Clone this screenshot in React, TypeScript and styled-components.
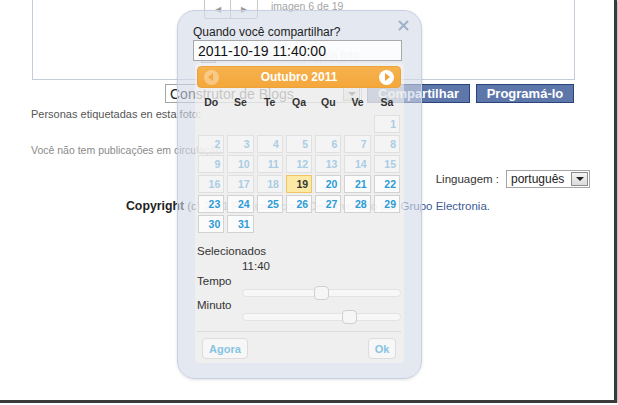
import React from 'react';
import styled, { createGlobalStyle, css } from 'styled-components';

const Global = createGlobalStyle`
  html, body { margin: 0; padding: 0; background: #fff; }
  body { font-family: "Liberation Sans", Arial, sans-serif; }
  * { box-sizing: border-box; }
`;

const Screen = styled.div`
  position: relative;
  width: 617px;
  height: 403px;
  border-right: 3px solid #3a3a3a;
  border-bottom: 3px solid #3a3a3a;
  box-shadow: 1px 1px 2px rgba(0, 0, 0, 0.35);
  overflow: hidden;
  background: #fff;
`;

const Preview = styled.div`
  margin-left: 32px;
  width: 543px;
  height: 80px;
  border: 1px solid #c5ccda;
  border-top: none;
  display: flex;
  flex-direction: column;
`;

const PagerRow = styled.div`
  display: flex;
  align-items: flex-start;
  margin-left: 171px;
  gap: 13px;
`;

const PagerGroup = styled.div`
  display: flex;
  margin-top: -2px;
  height: 21px;
  border: 1px solid #c9c9c9;
  border-radius: 2px;
`;

const PagerBtn = styled.div<{ $first?: boolean }>`
  width: 26px;
  display: flex;
  align-items: center;
  justify-content: center;
  color: #9a9a9a;
  font-size: 8px;
  padding-top: 2px;
  ${(p) => p.$first && css`border-right: 1px solid #c9c9c9;`}
`;

const Caption = styled.span`
  font-size: 10.5px;
  color: #a5a5a5;
  line-height: 12px;
`;

const UploadRow = styled.div`
  display: flex;
  align-items: center;
  gap: 20px;
  margin-top: 27px;
  margin-left: 168px;
`;

const UploadBox = styled.div`
  width: 15px;
  height: 17px;
  border: 1px solid #bbb;
  background: #f4f4f4;
`;

const UploadText = styled.span`
  font-size: 11px;
  color: #777;
`;

const ActionRow = styled.div`
  display: flex;
  align-items: flex-start;
  margin-top: 4px;
  margin-left: 165px;
`;

const Select = styled.div<{ $w: number; $h: number; $size: number }>`
  width: ${(p) => p.$w}px;
  height: ${(p) => p.$h}px;
  border: 1px solid #a5a5a5;
  background: #fff;
  display: flex;
  align-items: center;
  justify-content: space-between;
  padding-left: 4px;
  font-size: ${(p) => p.$size}px;
  color: #222;
  white-space: nowrap;
  overflow: hidden;
`;

const DropBtn = styled.div<{ $w: number }>`
  width: ${(p) => p.$w}px;
  align-self: stretch;
  margin: 1px;
  border: 1px solid #8c8c8c;
  background: linear-gradient(#f4f4f4, #dcdcdc);
  display: flex;
  align-items: center;
  justify-content: center;
  &::after {
    content: '';
    border-left: 4px solid transparent;
    border-right: 4px solid transparent;
    border-top: 4px solid #222;
  }
`;

const FbButton = styled.div<{ $w: number; $ml: number }>`
  width: ${(p) => p.$w}px;
  margin-left: ${(p) => p.$ml}px;
  height: 19px;
  background: #5e77aa;
  border: 1px solid #2a437a;
  color: #fff;
  font-weight: bold;
  font-size: 13px;
  display: flex;
  align-items: center;
  justify-content: center;
  white-space: nowrap;
`;

const Note = styled.div<{ $mt: number; $size: number; $color: string }>`
  margin-top: ${(p) => p.$mt}px;
  margin-left: 31px;
  font-size: ${(p) => p.$size}px;
  line-height: 14px;
  color: ${(p) => p.$color};
  white-space: nowrap;
`;

const LangRow = styled.div`
  display: flex;
  justify-content: flex-end;
  align-items: center;
  margin-top: 13px;
  padding-right: 24px;
  gap: 7px;
  font-size: 11.5px;
  color: #333;
`;

const Copyright = styled.div`
  margin-top: 11px;
  text-align: center;
  font-size: 11.5px;
  line-height: 14px;
  color: #666;
  white-space: nowrap;
  padding-left: 2px;
  b { color: #222; font-size: 12.3px; }
  a { color: #3b5998; text-decoration: none; }
`;

/* ---------- dialog ---------- */

const Dialog = styled.div`
  position: absolute;
  left: 177px;
  top: 10px;
  width: 245px;
  padding: 14px 16px 15px 15px;
  border: 1px solid #c7d1e2;
  border-radius: 18px;
  background: rgba(210, 217, 232, 0.6);
  box-shadow: 0 1px 3px rgba(0, 0, 0, 0.12);
  display: flex;
  flex-direction: column;
  color: #333;
`;

const Close = styled.div`
  position: absolute;
  top: 9px;
  right: 12px;
  width: 11px;
  height: 11px;
  display: flex;
`;

const Title = styled.div`
  font-size: 12px;
  line-height: 14px;
  color: #222;
  white-space: nowrap;
`;

const DateInput = styled.div`
  margin-top: 1px;
  width: 209px;
  height: 21px;
  border: 1px solid #a8a8a8;
  background: rgba(255, 255, 255, 0.85);
  font-size: 14px;
  color: #111;
  padding-left: 4px;
  display: flex;
  align-items: center;
`;

const Panel = styled.div`
  margin-top: 2px;
  margin-left: 2px;
  width: 209px;
  padding: 3px 3px 4px 2px;
  border-radius: 4px;
  background: rgba(250, 246, 237, 0.52);
  display: flex;
  flex-direction: column;
`;

const Header = styled.div`
  height: 22px;
  border: 1px solid #eea23a;
  border-radius: 4px;
  background: linear-gradient(#f6b24e, #f4a73b);
  color: #fff;
  font-weight: bold;
  font-size: 12px;
  display: flex;
  align-items: center;
  justify-content: space-between;
  padding: 0 6px 0 6px;
`;

const NavIcon = styled.div<{ $dir: 'prev' | 'next' }>`
  width: 15px;
  height: 15px;
  border-radius: 50%;
  background: #fff;
  opacity: ${(p) => (p.$dir === 'prev' ? 0.35 : 1)};
  display: flex;
  align-items: center;
  justify-content: center;
  &::after {
    content: '';
    border-top: 4px solid transparent;
    border-bottom: 4px solid transparent;
    ${(p) =>
      p.$dir === 'prev'
        ? css`border-right: 5px solid #f2a13a; margin-right: 2px;`
        : css`border-left: 5px solid #f2a13a; margin-left: 2px;`}
  }
`;

const WeekGrid = styled.div`
  display: grid;
  grid-template-columns: repeat(7, 1fr);
  column-gap: 3px;
  margin: 3px 1px 0 1px;
  height: 22px;
  align-items: center;
  text-align: center;
  font-weight: bold;
  font-size: 10.5px;
  color: #333;
`;

const DayGrid = styled.div`
  display: grid;
  grid-template-columns: repeat(7, 1fr);
  grid-auto-rows: 18px;
  column-gap: 3px;
  row-gap: 2px;
  margin: 2px 1px 0 1px;
`;

type CellKind = 'empty' | 'off' | 'on' | 'today';

const cellStyles: Record<CellKind, ReturnType<typeof css>> = {
  empty: css`border-color: transparent; background: transparent;`,
  off: css`border-color: rgba(215, 215, 215, 0.7); background: rgba(250, 250, 250, 0.45); color: #a9cde4;`,
  on: css`border-color: #d2d2d2; background: rgba(255, 255, 255, 0.72); color: #2c9bd6;`,
  today: css`border-color: #f0c660; background: #fde9a6; color: #363636;`,
};

const Cell = styled.div<{ $kind: CellKind }>`
  border: 1px solid;
  font-weight: bold;
  font-size: 10.5px;
  display: flex;
  align-items: center;
  justify-content: flex-end;
  padding-right: 3px;
  ${(p) => cellStyles[p.$kind]}
`;

const Label = styled.div<{ $mt?: number; $indent?: number }>`
  margin-top: ${(p) => p.$mt ?? 1}px;
  margin-left: ${(p) => p.$indent ?? 0}px;
  font-size: 11.5px;
  line-height: 14px;
  color: #333;
`;

const Track = styled.div`
  position: relative;
  margin-top: 1px;
  margin-left: 45px;
  width: 159px;
  height: 8px;
  border: 1px solid #e3e3e3;
  border-radius: 5px;
  background: #f7f7f7;
`;

const Handle = styled.div`
  position: absolute;
  top: -4px;
  width: 15px;
  height: 14px;
  border: 1px solid #cfcfcf;
  border-radius: 4px;
  background: #f6f6f6;
`;

const Separator = styled.div`
  margin-top: 10px;
  height: 1px;
  background: #dcdcdc;
`;

const ButtonRow = styled.div`
  display: flex;
  justify-content: space-between;
  margin: 6px 5px 0 5px;
`;

const PanelButton = styled.div<{ $w: number }>`
  width: ${(p) => p.$w}px;
  height: 21px;
  border: 1px solid #dcdcdc;
  border-radius: 4px;
  background: #f7f7f7;
  color: #86c4e4;
  font-weight: bold;
  font-size: 11px;
  display: flex;
  align-items: center;
  justify-content: center;
`;

const weekDays = ['Do', 'Se', 'Te', 'Qa', 'Qu', 'Ve', 'Sa'];

const days: { label: string; kind: CellKind }[] = [
  ...Array.from({ length: 6 }, () => ({ label: '', kind: 'empty' as CellKind })),
  ...Array.from({ length: 31 }, (_, i) => {
    const d = i + 1;
    const kind: CellKind = d < 19 ? 'off' : d === 19 ? 'today' : 'on';
    return { label: String(d), kind };
  }),
];

function Slider({ value, max }: { value: number; max: number }) {
  const ratio = value / max;
  return (
    <Track>
      <Handle style={{ left: `calc((100% - 15px) * ${ratio.toFixed(3)} + 3px)` }} />
    </Track>
  );
}

export default function App() {
  return (
    <>
      <Global />
      <Screen>
        <Preview>
          <PagerRow>
            <PagerGroup>
              <PagerBtn $first>◀</PagerBtn>
              <PagerBtn>▶</PagerBtn>
            </PagerGroup>
            <Caption>imagen 6 de 19</Caption>
          </PagerRow>
          <UploadRow>
            <UploadBox />
            <UploadText>Carregar sua própria foto</UploadText>
          </UploadRow>
        </Preview>

        <ActionRow>
          <Select $w={197} $h={19} $size={14}>
            Construtor de Blogs
            <DropBtn $w={17} />
          </Select>
          <FbButton $w={103} $ml={5}>Compartilhar</FbButton>
          <FbButton $w={98} $ml={6}>Programá-lo</FbButton>
        </ActionRow>

        <Note $mt={4} $size={11} $color="#555">Personas etiquetadas en esta foto:</Note>
        <Note $mt={22} $size={10.5} $color="#8a8a8a">Você não tem publicações em circulação.</Note>

        <LangRow>
          Linguagem :
          <Select $w={84} $h={18} $size={12}>
            português
            <DropBtn $w={17} />
          </Select>
        </LangRow>

        <Copyright>
          <b>Copyright</b> (c) 2011 Postcron.com. Desenvolvido por <a>Grupo Electronia.</a>
        </Copyright>

        <Dialog>
          <Close>
            <svg width="11" height="11" viewBox="0 0 11 11">
              <path d="M1.5 1.5 L9.5 9.5 M9.5 1.5 L1.5 9.5" stroke="#9fb0cb" strokeWidth="2" strokeLinecap="round" />
            </svg>
          </Close>
          <Title>Quando você compartilhar?</Title>
          <DateInput>2011-10-19 11:40:00</DateInput>
          <Panel>
            <Header>
              <NavIcon $dir="prev" />
              Outubro 2011
              <NavIcon $dir="next" />
            </Header>
            <WeekGrid>
              {weekDays.map((d) => (
                <span key={d}>{d}</span>
              ))}
            </WeekGrid>
            <DayGrid>
              {days.map((d, i) => (
                <Cell key={i} $kind={d.kind}>
                  {d.label}
                </Cell>
              ))}
            </DayGrid>
            <Label $mt={11}>Selecionados</Label>
            <Label $indent={45}>11:40</Label>
            <Label>Tempo</Label>
            <Slider value={11} max={23} />
            <Label>Minuto</Label>
            <Slider value={40} max={59} />
            <Separator />
            <ButtonRow>
              <PanelButton $w={46}>Agora</PanelButton>
              <PanelButton $w={28}>Ok</PanelButton>
            </ButtonRow>
          </Panel>
        </Dialog>
      </Screen>
    </>
  );
}
